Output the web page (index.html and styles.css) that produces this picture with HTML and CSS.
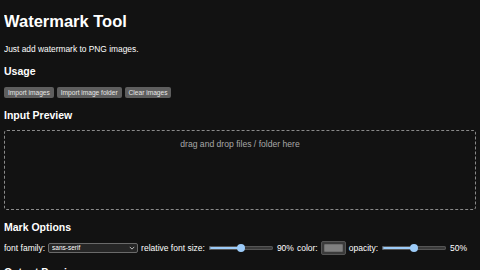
FILE: index.html
```html
<!DOCTYPE html>
<html lang="en">
<head>
    <meta charset="UTF-8">
    <meta name="viewport" content="width=device-width, initial-scale=1.0">
    <title>Watermark Tool</title>
    <link rel="stylesheet" href="styles.css">
</head>
<body>
    <h1>Watermark Tool</h1>
    <p class="intro">Just add watermark to PNG images.</p>

    <h3>Usage</h3>
    <div class="button-row">
        <button class="button" id="importImages">Import images</button>
        <button class="button" id="importFolder">Import image folder</button>
        <button class="button" id="clearImages">Clear images</button>
    </div>

    <h3>Input Preview</h3>
    <div class="drop-zone" id="dropZone">drag and drop files / folder here</div>

    <h3>Mark Options</h3>
    <div class="options">
        <label for="fontFamily">font family:</label>
        <span class="select-wrap">
            <select id="fontFamily">
                <option>sans-serif</option>
                <option>serif</option>
                <option>monospace</option>
            </select>
            <svg class="chevron" viewBox="0 0 8 5" width="6" height="4"><path d="M1 1l3 3 3-3" fill="none" stroke="#ccc" stroke-width="1.2"/></svg>
        </span>
        <label for="fontSize">relative font size:</label>
        <input type="range" id="fontSize" min="0" max="180" value="90" style="--fill: 50%">
        <span class="value">90%</span>
        <label for="markColor">color:</label>
        <input type="color" id="markColor" value="#808080">
        <label for="opacity">opacity:</label>
        <input type="range" id="opacity" min="0" max="100" value="50" style="--fill: 50%">
        <span class="value">50%</span>
    </div>

    <h3>Output Preview</h3>
</body>
</html>
```

FILE: styles.css
```css
body {
    margin: 4px;
    background-color: #121212;
    color: white;
    font-family: 'Liberation Sans', Arial, sans-serif;
    font-size: 9px;
}
h1 {
    font-size: 16.5px;
    font-weight: bold;
    margin: 8px 0 0;
}
.intro {
    margin: 13px 0 0;
    font-size: 8.4px;
}
h3 {
    font-size: 10.5px;
    font-weight: bold;
    margin: 11px 0 0;
}
.button-row {
    display: flex;
    gap: 3px;
    margin-top: 10px;
}
.button {
    height: 11px;
    padding: 0 4px;
    border: none;
    border-radius: 2px;
    background-color: #5e5e5e;
    color: #e6e6e6;
    font-family: inherit;
    font-size: 6.6px;
    line-height: 11px;
}
.drop-zone {
    margin-top: 9px;
    height: 80px;
    border: 1px dashed #8a8a8a;
    border-radius: 3px;
    padding-top: 8px;
    box-sizing: border-box;
    text-align: center;
    color: #a8a8a8;
    font-size: 8.6px;
}
.options {
    display: flex;
    align-items: center;
    gap: 3px;
    margin-top: 8px;
    font-size: 8.5px;
}
.select-wrap {
    position: relative;
    display: inline-flex;
}
.select-wrap select {
    appearance: none;
    width: 90px;
    height: 10px;
    padding: 0 3px;
    border: 1px solid #6a6a6a;
    border-radius: 2px;
    background-color: #262626;
    color: white;
    font-family: inherit;
    font-size: 6.5px;
    line-height: 8px;
}
.chevron {
    position: absolute;
    right: 3px;
    top: 3px;
    pointer-events: none;
}
input[type="range"] {
    appearance: none;
    width: 64px;
    height: 8px;
    margin: 0 1px;
    background: transparent;
}
input[type="range"]::-webkit-slider-runnable-track {
    height: 4px;
    border-radius: 2px;
    background: linear-gradient(to right, #9ccbf8 var(--fill), #3a3a3a var(--fill));
    box-shadow: inset 0 0 0 1px #555;
}
input[type="range"]::-webkit-slider-thumb {
    appearance: none;
    width: 8px;
    height: 8px;
    margin-top: -2px;
    border-radius: 50%;
    background: #9ccbf8;
}
input[type="color"] {
    appearance: none;
    width: 25px;
    height: 14px;
    padding: 2px;
    border: 1px solid #555;
    border-radius: 2px;
    background-color: #3b3b3b;
}
input[type="color"]::-webkit-color-swatch-wrapper {
    padding: 0;
}
input[type="color"]::-webkit-color-swatch {
    border: 1px solid #6e6e6e;
    border-radius: 1px;
}
```
